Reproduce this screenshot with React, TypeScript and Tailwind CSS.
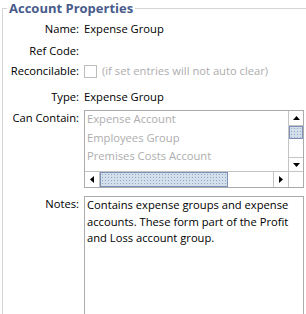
import React from "react";

const FONT = "font-['Segoe_UI','Open_Sans','Noto_Sans',sans-serif]";

function Arrow({ dir }: { dir: "up" | "down" | "left" | "right" }) {
  const pts = {
    up: "0,4 7,4 3.5,0",
    down: "0,0 7,0 3.5,4",
    left: "4,0 4,7 0,3.5",
    right: "0,0 0,7 4,3.5",
  }[dir];
  const vertical = dir === "up" || dir === "down";
  return (
    <svg width={vertical ? 7 : 4} height={vertical ? 4 : 7} viewBox={vertical ? "0 0 7 4" : "0 0 4 7"}>
      <polygon points={pts} fill="#000" />
    </svg>
  );
}

const THUMB =
  "bg-[#d3e0ec] bg-[image:radial-gradient(circle,#8fa6c4_0.6px,transparent_0.9px)] bg-[size:3px_3px] border border-[#7e8fb8]";

function ListBox() {
  const items = ["Expense Account", "Employees Group", "Premises Costs Account", "Purchases Account"];
  return (
    <div className="grid h-[78px] w-[220px] grid-cols-[1fr_15px] grid-rows-[1fr_16px] border border-[#ababab] bg-white">
      <div className="overflow-hidden pl-[2px]">
        {items.map((t) => (
          <div key={t} className="h-[18.5px] whitespace-nowrap text-[11.2px] leading-[16px] text-[#adadad]">
            {t}
          </div>
        ))}
      </div>
      <div className="flex flex-col border-l border-[#c4c4c4]">
        <div className="flex h-[15px] items-center justify-center border-b border-[#c4c4c4]">
          <Arrow dir="up" />
        </div>
        <div className={`h-[13px] ${THUMB}`} />
        <div className="flex-1" />
        <div className="flex h-[14px] items-center justify-center border-t border-[#c4c4c4]">
          <Arrow dir="down" />
        </div>
      </div>
      <div className="flex border-t border-[#c4c4c4]">
        <div className="flex w-[15px] items-center justify-center border-r border-[#c4c4c4]">
          <Arrow dir="left" />
        </div>
        <div className={`w-[128px] ${THUMB}`} />
        <div className="flex-1" />
        <div className="flex w-[15px] items-center justify-center border-l border-[#c4c4c4]">
          <Arrow dir="right" />
        </div>
      </div>
      <div className="border-l border-t border-[#c4c4c4] bg-white" />
    </div>
  );
}

function Label({ children, top }: { children: React.ReactNode; top?: boolean }) {
  return (
    <div className={`flex w-[76px] justify-end whitespace-nowrap text-[11.2px] text-black ${top ? "items-start" : "items-center"}`}>
      {children}
    </div>
  );
}

export default function App() {
  return (
    <div className={`h-[314px] w-[306px] overflow-hidden bg-white ${FONT}`}>
      <fieldset className="ml-[2px] h-[340px] w-[330px] border-l border-t border-[#d5d5d5]">
        <legend className="ml-[4px] px-[2px] text-[13px] font-bold leading-[16px] text-[#485b8c]">
          Account Properties
        </legend>

        <div className="flex flex-col">
          <div className="mt-[4px] flex h-[18px] gap-[5px]">
            <Label>Name:</Label>
            <div className="flex items-center text-[11.2px] text-black">Expense Group</div>
          </div>

          <div className="mt-[4px] flex h-[18px] gap-[5px]">
            <Label>Ref Code:</Label>
          </div>

          <div className="mt-[2px] flex h-[18px] gap-[5px]">
            <Label>Reconcilable:</Label>
            <div className="flex items-center gap-[5px]">
              <div className="h-[13px] w-[13px] border border-[#bcbcbc] bg-white" />
              <span className="text-[11.2px] text-[#adadad]">(if set entries will not auto clear)</span>
            </div>
          </div>

          <div className="mt-[8px] flex h-[18px] gap-[5px]">
            <Label>Type:</Label>
            <div className="flex items-center text-[11.2px] text-black">Expense Group</div>
          </div>

          <div className="mt-[4px] flex gap-[5px]">
            <Label top>
              <span className="leading-[16px]">Can Contain:</span>
            </Label>
            <ListBox />
          </div>

          <div className="mt-[8px] flex gap-[5px]">
            <Label top>
              <span className="leading-[16.5px]">Notes:</span>
            </Label>
            <div className="h-[140px] w-[220px] border border-[#ababab] bg-white px-[2px] text-[11.2px] leading-[16.5px] text-black">
              Contains expense groups and expense accounts. These form part of the Profit and Loss account group.
            </div>
          </div>
        </div>
      </fieldset>
    </div>
  );
}
